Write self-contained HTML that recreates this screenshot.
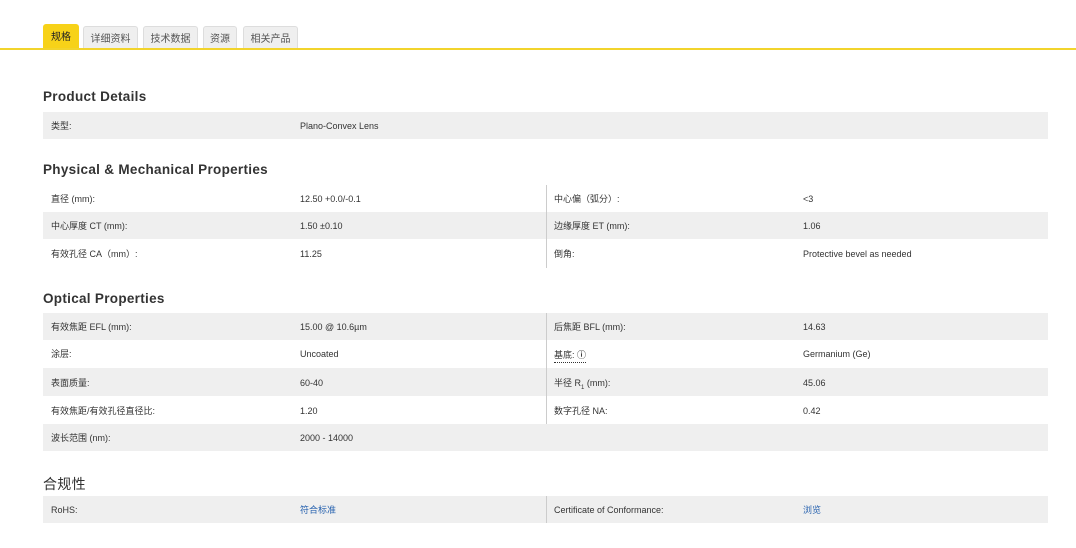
<!DOCTYPE html>
<html><head><meta charset="utf-8"><style>
body{margin:0;width:1076px;height:548px;background:#fff;font-family:"Liberation Sans","Noto Sans CJK SC",sans-serif;color:#333;position:relative;overflow:hidden}
.tabbar{position:absolute;left:0;top:48px;width:1076px;height:2px;background:#f2d42c}
.tab{position:absolute;top:26px;height:22px;background:#efefef;border:1px solid #ddd;border-bottom:none;border-radius:3px 3px 0 0;font-size:10px;line-height:25px;text-align:center;color:#555}
.tab.a{background:#f7d218;border-color:#f7d218;color:#222;top:24px;height:24px;line-height:26px}
h2{position:absolute;left:43px;margin:0;font-size:13.5px;font-weight:bold;color:#333;letter-spacing:.3px}
.row{position:absolute;left:43px;width:1005px;height:27px;font-size:9px;line-height:29px;color:#333}
.g{background:#efefef}
.row span{position:absolute}
.l1{left:8px}.v1{left:257px}.l2{left:511px}.v2{left:760px}
.div{position:absolute;left:546px;width:1px;background:#ccc}
a{color:#2a64b0;text-decoration:none}
</style></head><body>
<div class="tab a" style="left:43px;width:34px">规格</div>
<div class="tab" style="left:83px;width:53px">详细资料</div>
<div class="tab" style="left:143px;width:53px">技术数据</div>
<div class="tab" style="left:203px;width:32px">资源</div>
<div class="tab" style="left:243px;width:53px">相关产品</div>
<div class="tabbar"></div>

<h2 style="top:89px">Product Details</h2>
<div class="row g" style="top:112px"><span class="l1">类型:</span><span class="v1">Plano-Convex Lens</span></div>

<h2 style="top:162px">Physical &amp; Mechanical Properties</h2>
<div class="row" style="top:185px"><span class="l1">直径 (mm):</span><span class="v1">12.50 +0.0/-0.1</span><span class="l2">中心偏（弧分）:</span><span class="v2">&lt;3</span></div>
<div class="row g" style="top:212px"><span class="l1">中心厚度 CT (mm):</span><span class="v1">1.50 ±0.10</span><span class="l2">边缘厚度 ET (mm):</span><span class="v2">1.06</span></div>
<div class="row" style="top:240px"><span class="l1">有效孔径 CA（mm）:</span><span class="v1">11.25</span><span class="l2">倒角:</span><span class="v2">Protective bevel as needed</span></div>
<div class="div" style="top:185px;height:83px"></div>

<h2 style="top:291px">Optical Properties</h2>
<div class="row g" style="top:313px"><span class="l1">有效焦距 EFL (mm):</span><span class="v1">15.00 @ 10.6µm</span><span class="l2">后焦距 BFL (mm):</span><span class="v2">14.63</span></div>
<div class="row" style="top:340px"><span class="l1">涂层:</span><span class="v1">Uncoated</span><span class="l2" style="border-bottom:1px dotted #333;line-height:13px;top:9px">基底: <b>ⓘ</b></span><span class="v2">Germanium (Ge)</span></div>
<div class="row g" style="top:368px;height:28px;line-height:30px"><span class="l1">表面质量:</span><span class="v1">60-40</span><span class="l2">半径 R<sub style="font-size:6px">1</sub> (mm):</span><span class="v2">45.06</span></div>
<div class="row" style="top:396px;height:28px;line-height:30px"><span class="l1">有效焦距/有效孔径直径比:</span><span class="v1">1.20</span><span class="l2">数字孔径 NA:</span><span class="v2">0.42</span></div>
<div class="row g" style="top:424px"><span class="l1">波长范围 (nm):</span><span class="v1">2000 - 14000</span></div>
<div class="div" style="top:313px;height:111px"></div>

<h2 style="top:474px;font-weight:normal;font-size:14px">合规性</h2>
<div class="row g" style="top:496px"><span class="l1">RoHS:</span><span class="v1"><a>符合标准</a></span><span class="l2">Certificate of Conformance:</span><span class="v2"><a>浏览</a></span></div>
<div class="div" style="top:496px;height:27px"></div>
</body></html>
